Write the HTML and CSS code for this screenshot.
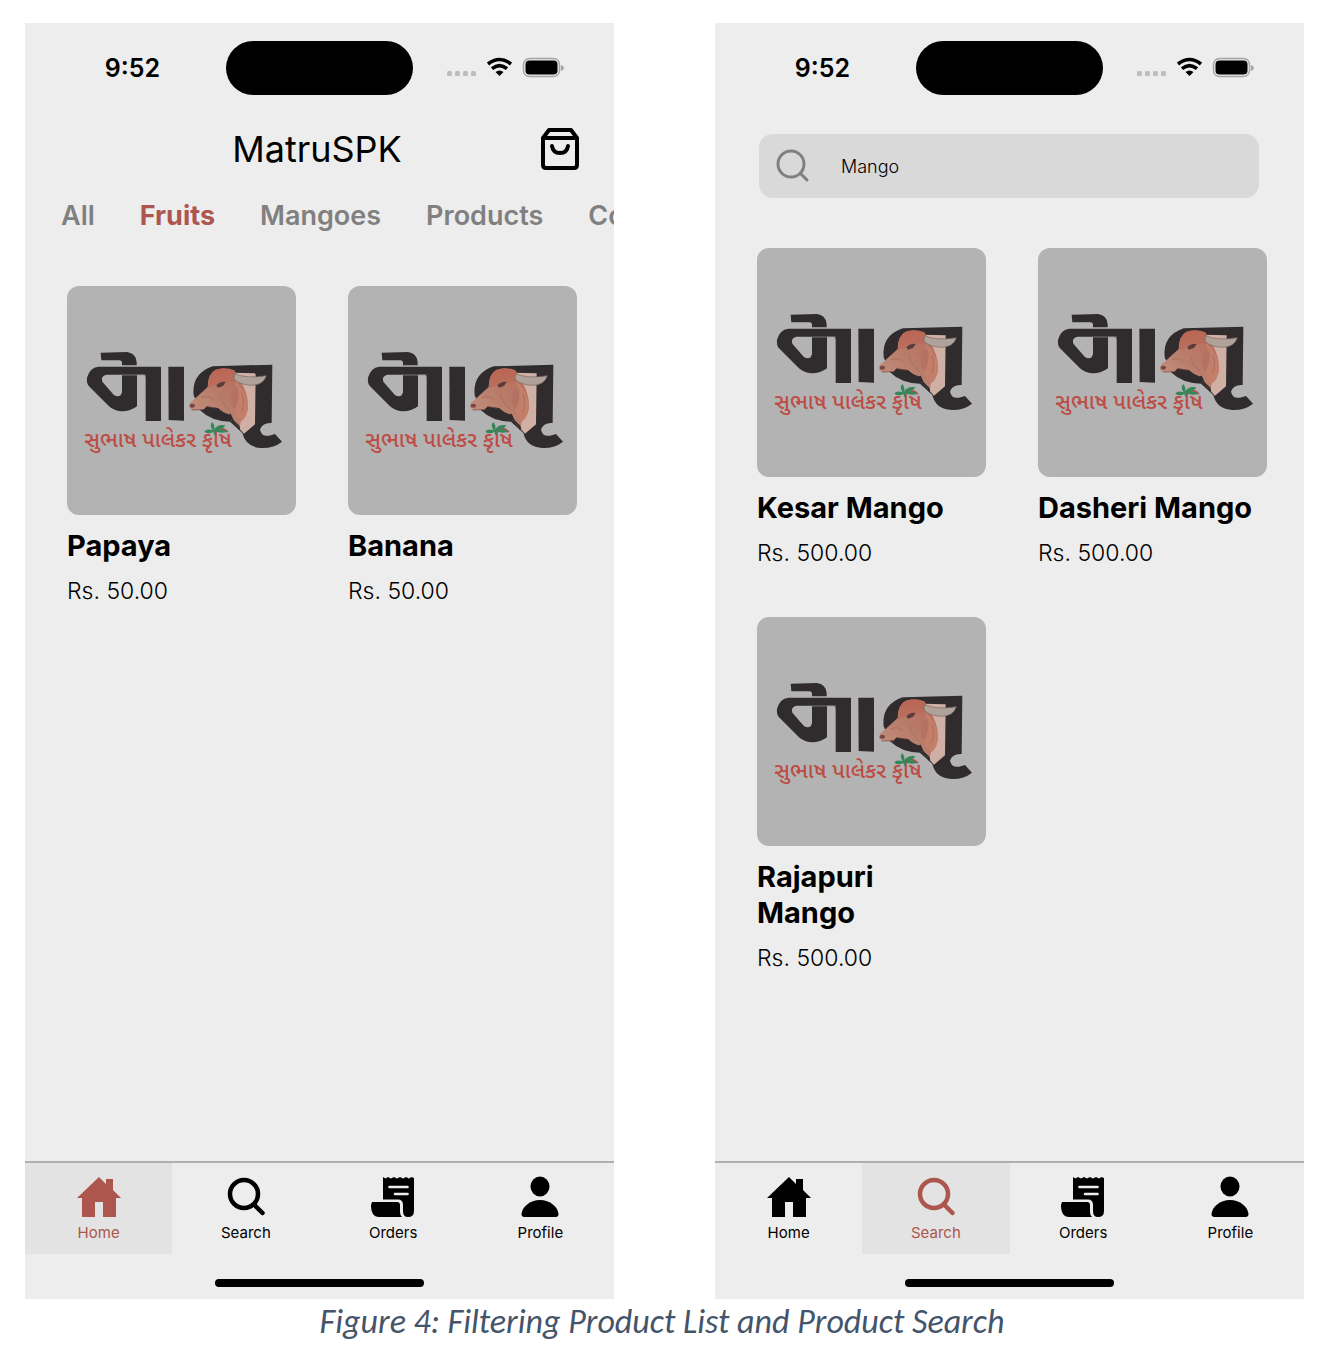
FILE: index.html
```html
<!DOCTYPE html>
<html lang="en">
<head>
<meta charset="utf-8">
<meta name="viewport" content="width=device-width, initial-scale=1">
<title>Filtering Product List and Product Search</title>
<link rel="stylesheet" href="styles.css">
</head>
<body>
<svg class="sprite" width="0" height="0" aria-hidden="true">
  <defs>
    <linearGradient id="hide" x1="0" y1="1" x2="1" y2="0">
      <stop offset="0" stop-color="#c79582"/><stop offset="0.5" stop-color="#b87d6b"/><stop offset="1" stop-color="#b9695a"/>
    </linearGradient>
    <linearGradient id="brow" x1="0" y1="0" x2="0" y2="1">
      <stop offset="0" stop-color="#bb6554"/><stop offset="1" stop-color="#b9705f"/>
    </linearGradient>
  </defs>
  <symbol id="logo" viewBox="6 17 687 687">
    <g fill="#302c2e">
      <path d="M107 217 L186 215 Q215 220 215 246 V255 H171 V248 Q171 240 163 240 H109 Z"/>
      <path fill-rule="evenodd" d="M100 259 H288 V422 H242 V292 Q242 283 234 283 H216 V378 Q195 394 168 393 Q148 392 132 378 L72 318 Q64 308 66 292 Q74 262 100 259 Z M124 283 Q106 287 112 304 L146 343 Q158 352 167 345 L171 336 V283 Z"/>
      <path d="M310 259 H357 V421 L311 419 Z"/>
      <path d="M443 258 L622 253 L620 428 Q592 426 585 448 Q590 470 612 466 L630 461 L651 484 Q626 504 590 503 Q542 501 532 458 L495 424 Q440 424 405 390 L386 345 Q379 280 443 258 Z"/>
    </g>
    <path d="M170 284 H243" stroke="#9a9899" stroke-width="2"/>
    <path d="M505 277 L572 279 L570 432 L537 460 L500 420 Z" fill="#d0b0a5"/>
    <path d="M372 376 Q373 366 386 358 L428 320 Q428 280 452 268 Q480 258 508 270 L524 300 Q550 335 549 382 Q545 412 527 424 L524 444 L504 422 L494 403 Q475 398 459 383 L425 379 L415 388 L386 389 Q372 387 372 376 Z" fill="url(#hide)"/>
    <path d="M429 316 Q429 280 453 268 Q480 259 507 272 L513 303 Q470 308 429 324 Z" fill="url(#brow)"/>
    <path d="M512 302 Q549 340 549 382 Q545 411 526 424 L508 394 Q498 366 510 338 Z" fill="#c47f6b"/>
    <path d="M515 317 Q493 335 498 370 L508 388 Q524 362 520 330 Z" fill="#b47362"/>
    <path d="M530 338 Q541 365 530 394 M462 342 Q468 365 493 388 M408 352 Q430 344 444 358" fill="none" stroke="#ab6f5f" stroke-width="3"/>
    <path d="M454 315 Q466 302 482 305 L474 317 L459 322 Z" fill="#5b3c3b"/>
    <ellipse cx="382" cy="376" rx="8" ry="6" fill="#764845"/>
    <path d="M380 389 L416 388 L425 378 L455 384" fill="none" stroke="#74433e" stroke-width="2"/>
    <path d="M494 401 L504 422 L520 437 L523 447" fill="none" stroke="#302c2e" stroke-width="6"/>
    <path d="M508 280 Q545 296 604 286 Q596 314 559 315 Q521 313 507 296 Z" fill="#afa29b" stroke="#77635e" stroke-width="2"/>
    <text class="tagline" x="58" y="500">સુભાષ પાલેકર કૃષિ</text>
    <path d="M443 450 Q432 435 442 425 Q452 439 447 448 Q457 430 481 435 Q475 447 456 448 Q475 444 488 454 Q467 461 450 452 L455 462 L448 464 L445 455 Q430 463 418 454 Q424 443 443 450 Z" fill="#37865a"/>
  </symbol>
  <symbol id="i-home" viewBox="0 0 44 42">
    <path d="M22 1 L29 8 V3 H36 V14 L44 22 H39 V41 H26 V26 H18 V41 H5 V22 H0 Z" fill="currentColor"/>
  </symbol>
  <symbol id="i-search" viewBox="0 0 44 42">
    <g fill="none" stroke="currentColor" stroke-width="4.500" stroke-linecap="round"><circle cx="20" cy="18" r="14"/><path d="M30 28.500 L38.500 37"/></g>
  </symbol>
  <symbol id="i-orders" viewBox="0 0 44 42">
    <path d="M12 1 L14.500 2.500 L17 1 L20 2.500 L23 1 L26 2.500 L29 1 L32 2.500 L35 1 L38 2.500 L40.500 1 L43 2 V35 Q43 41 37 41 Q32 41 32 35 V29 Q32 23.500 27 23.500 H12 Z" fill="currentColor"/>
    <path d="M1 26 H26 Q29 26 29 29 V36 Q29 39 31 41 H8 Q0 41 0 29 Z" fill="currentColor"/>
    <path class="i-orders-lines" d="M18.500 11 H36.500 M24 18 H36.500" fill="none" stroke-width="2.600" stroke-linecap="round"/>
  </symbol>
  <symbol id="i-profile" viewBox="0 0 44 42">
    <ellipse cx="22" cy="10.500" rx="9.500" ry="10" fill="currentColor"/>
    <path d="M22 24 C32 24 40 31 40.500 38 Q40.500 41 37.500 41 H6.500 Q3.500 41 3.500 38 C4 31 12 24 22 24 Z" fill="currentColor"/>
  </symbol>
  <symbol id="i-signal" viewBox="0 0 118 24">
    <g fill="#bdbdbd"><rect x="0" y="15" width="5" height="5" rx="1.500"/><rect x="8" y="15" width="5" height="5" rx="1.500"/><rect x="16" y="15" width="5" height="5" rx="1.500"/><rect x="24" y="15" width="5" height="5" rx="1.500"/></g>
    <g fill="none" stroke="#000" stroke-width="3.600"><path d="M41 8 Q52.500 -1 64 8"/><path d="M45 12.700 Q52.500 6.500 60 12.700"/></g>
    <path d="M48.500 16 Q52.500 13 56.500 16 L52.500 20 Z"/>
    <rect x="76.500" y="2.500" width="36" height="18" rx="6" fill="none" stroke="#a5a5a5" stroke-width="1.500"/>
    <rect x="78.500" y="4.500" width="32" height="14" rx="4"/>
    <path d="M114 9 Q117 10 117 12 Q117 14 114 15 Z" fill="#a5a5a5"/>
  </symbol>
</svg>

<main class="figure">
  <section class="phone" aria-label="Product list">
    <div class="status">
      <span class="time">9:52</span><span class="island"></span>
      <svg class="signal"><use href="#i-signal"/></svg>
    </div>
    <header class="topbar">
      <h1 class="brand">MatruSPK</h1>
      <button class="cart" type="button" aria-label="Cart">
        <svg viewBox="0 0 38 42" width="38" height="42" fill="none" stroke="#000" stroke-width="4" stroke-linejoin="round" stroke-linecap="round">
          <path d="M2 10 H36 V37 Q36 40 33 40 H5 Q2 40 2 37 Z M2 10 L8 2 H30 L36 10"/><path d="M11 18 Q12 25 19 25 Q26 25 27 18"/>
        </svg>
      </button>
    </header>
    <div class="tabs">
      <button class="tab" type="button">All</button>
      <button class="tab tab-active" type="button">Fruits</button>
      <button class="tab" type="button">Mangoes</button>
      <button class="tab" type="button">Products</button>
      <button class="tab" type="button">Co</button>
    </div>
    <div class="products">
      <article class="card"><svg class="photo"><use href="#logo"/></svg><h2 class="name">Papaya</h2><p class="price">Rs. 50.00</p></article>
      <article class="card"><svg class="photo"><use href="#logo"/></svg><h2 class="name">Banana</h2><p class="price">Rs. 50.00</p></article>
    </div>
    <nav class="nav">
      <a class="nav-item nav-active" href="#home"><svg class="icon"><use href="#i-home"/></svg>Home</a>
      <a class="nav-item" href="#search"><svg class="icon"><use href="#i-search"/></svg>Search</a>
      <a class="nav-item" href="#orders"><svg class="icon"><use href="#i-orders"/></svg>Orders</a>
      <a class="nav-item" href="#profile"><svg class="icon"><use href="#i-profile"/></svg>Profile</a>
    </nav>
    <div class="home-bar"></div>
  </section>

  <section class="phone" aria-label="Product search">
    <div class="status">
      <span class="time">9:52</span><span class="island"></span>
      <svg class="signal"><use href="#i-signal"/></svg>
    </div>
    <label class="search">
      <svg class="search-icon" viewBox="0 0 34 34" fill="none" stroke="#808080" stroke-width="3" stroke-linecap="round"><circle cx="15" cy="15" r="13"/><path d="M24.500 24.500 L31 31"/></svg>
      <input class="search-input" type="text" value="Mango" aria-label="Search products">
    </label>
    <div class="products">
      <article class="card"><svg class="photo"><use href="#logo"/></svg><h2 class="name">Kesar Mango</h2><p class="price">Rs. 500.00</p></article>
      <article class="card"><svg class="photo"><use href="#logo"/></svg><h2 class="name">Dasheri Mango</h2><p class="price">Rs. 500.00</p></article>
      <article class="card"><svg class="photo"><use href="#logo"/></svg><h2 class="name">Rajapuri Mango</h2><p class="price">Rs. 500.00</p></article>
    </div>
    <nav class="nav">
      <a class="nav-item" href="#home"><svg class="icon"><use href="#i-home"/></svg>Home</a>
      <a class="nav-item nav-active" href="#search"><svg class="icon"><use href="#i-search"/></svg>Search</a>
      <a class="nav-item" href="#orders"><svg class="icon"><use href="#i-orders"/></svg>Orders</a>
      <a class="nav-item" href="#profile"><svg class="icon"><use href="#i-profile"/></svg>Profile</a>
    </nav>
    <div class="home-bar"></div>
  </section>
</main>
<p class="caption">Figure 4: Filtering Product List and Product Search</p>
</body>
</html>
```
FILE: styles.css
```css
* { box-sizing: border-box; }

body {
  margin: 0;
  min-height: 100vh;
  display: flex;
  flex-direction: column;
  background: #fff;
  color: #000;
  font-family: Inter, "Liberation Sans", sans-serif;
}

.sprite { position: absolute; }

h1, h2, p { margin: 0; }

button {
  border: 0;
  padding: 0;
  background: none;
  font: inherit;
  color: inherit;
}

.figure {
  flex: 1;
  display: grid;
  grid-template-columns: minmax(0, 1fr) minmax(0, 1fr);
  gap: 101px;
  padding: 23px 20px 0 25px;
}

.phone {
  display: flex;
  flex-direction: column;
  background: #ededed;
}

.status {
  display: grid;
  grid-template-columns: 1fr 187px 1fr;
  align-items: center;
  padding-top: 18px;
}

.time {
  padding-left: 14px;
  text-align: center;
  font-size: 25px;
  font-weight: 600;
}

.island {
  height: 54px;
  border-radius: 27px;
  background: #000;
}

.signal {
  width: 118px;
  height: 24px;
  margin-left: 34px;
}

.topbar {
  display: grid;
  grid-template-columns: 1fr auto 1fr;
  align-items: center;
  height: 60px;
  margin-top: 24px;
  padding: 0 35px 0 30px;
}

.brand {
  grid-column: 2;
  font-size: 36px;
  font-weight: 400;
}

.cart {
  justify-self: end;
  height: 42px;
}

.tabs {
  display: flex;
  gap: 45px;
  height: 40px;
  margin-top: 16px;
  padding-left: 36px;
  overflow: hidden;
  white-space: nowrap;
}

.tab {
  color: #808080;
  font-size: 27px;
  font-weight: 600;
}

.tab-active {
  color: #ac564e;
  font-weight: 700;
}

.products {
  display: grid;
  grid-template-columns: minmax(0, 1fr) minmax(0, 1fr);
  gap: 49px 52px;
  padding: 50px 37px 49px 42px;
}

.tabs + .products { padding-top: 51px; }

.photo {
  display: block;
  width: 100%;
  aspect-ratio: 1;
  border-radius: 12px;
  background: #b3b3b3;
}

.tagline {
  font-family: "Noto Sans Gujarati", "Noto Sans", sans-serif;
  font-size: 65px;
  font-weight: 500;
  fill: #bd4c45;
}

.name {
  margin-top: 13px;
  padding-right: 10px;
  font-size: 29px;
  line-height: 36px;
  font-weight: 700;
}

.price {
  margin-top: 12px;
  font-size: 23px;
  line-height: 30px;
  font-weight: 300;
}

.search {
  display: flex;
  align-items: center;
  gap: 31px;
  height: 64px;
  margin: 39px 45px 0 44px;
  padding: 0 17px;
  border-radius: 14px;
  background: #d9d9d9;
}

.search-icon {
  flex: none;
  width: 34px;
  height: 34px;
}

.search-input {
  flex: 1;
  min-width: 0;
  border: 0;
  padding: 0;
  background: none;
  color: #000;
  font: 300 18px Inter, sans-serif;
}

.nav {
  display: grid;
  grid-template-columns: repeat(4, 1fr);
  margin-top: auto;
  border-top: 2px solid #b0b0b0;
}

.nav-item {
  display: flex;
  flex-direction: column;
  align-items: center;
  gap: 6px;
  height: 91px;
  padding-top: 13px;
  color: #000;
  font-size: 15px;
  line-height: 18px;
  text-decoration: none;
}

.nav-active {
  background: #e3e3e3;
  color: #ac564e;
}

.icon {
  width: 44px;
  height: 42px;
}

.i-orders-lines { stroke: #ededed; }

.home-bar {
  align-self: center;
  width: 209px;
  height: 8px;
  margin: 25px 0 12px;
  border-radius: 4px;
  background: #000;
}

.caption {
  padding-bottom: 5px;
  color: #44546a;
  font-family: Carlito, Lato, sans-serif;
  font-size: 34px;
  font-style: italic;
  line-height: 46px;
  text-align: center;
}
```
